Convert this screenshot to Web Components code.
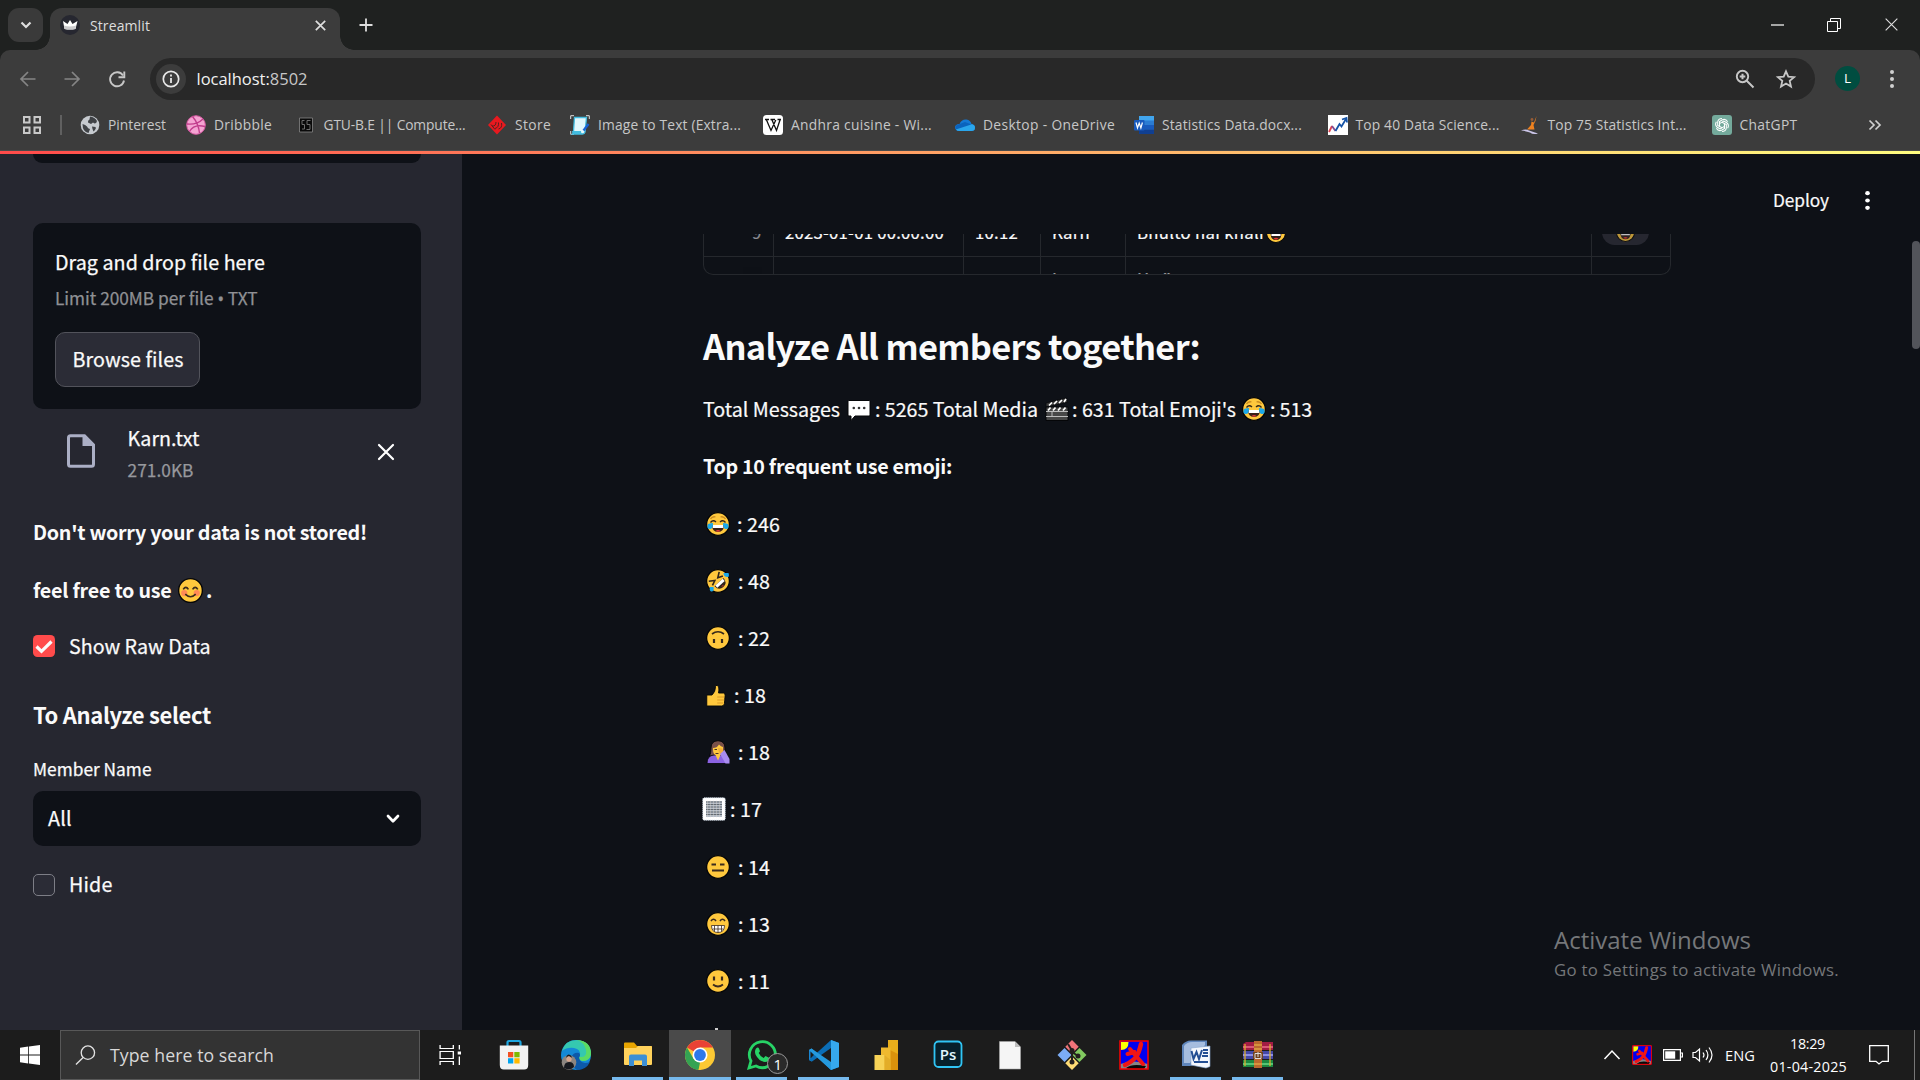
<!DOCTYPE html>
<html lang="en">
<head>
<meta charset="utf-8">
<title>Streamlit</title>
<style>
html,body{margin:0;height:100%;overflow:hidden;background:#0e1117}
body{font-family:"Open Sans","Noto Sans",sans-serif}
</style>
</head>
<body>
<desktop-screen></desktop-screen>
<script>
const face='<circle cx="12" cy="12" r="11.4" fill="#ffc83d" stroke="#050608" stroke-width="1.3"/>';
const tears='<path d="M2 12q3-1 5-1 0 6-3 6-4 0-2-5zM22 12q-3-1-5-1 0 6 3 6 4 0 2-5z" fill="#1ba8e8"/>';
const joy=face+'<path d="M4.5 7q2-3 5-2M19.500 7q-2-3-5-2" fill="none" stroke="#c88a20" stroke-width="1.300"/><path d="M4.500 10.500q2.500-3 5.500-.5M14 10q3-2.500 5.500.5" fill="none" stroke="#33261a" stroke-width="1.400"/><path d="M6 13h12q0 7-6 7t-6-7z" fill="#3a2118"/><path d="M6.700 13h10.600v3H6.700z" fill="#fff"/><path d="M9.500 19q2.500-2 5 0-2.500 1.500-5 0z" fill="#e33b3b"/>'+tears;
const laugh=face+'<path d="M4 9q3-3 6 0M14 9q3-3 6 0" fill="none" stroke="#33261a" stroke-width="1.400"/><path d="M5.500 12.500h13q0 8-6.500 8t-6.500-8z" fill="#30201b"/><path d="M6.500 12.500h11v3h-11z" fill="#fff"/><path d="M9 19q3-2.500 6 0-3 2-6 0z" fill="#e8352f"/>';
const runner='<path d="M1 1h28v28H1z" fill="#0000f0"/><path d="M1.500 24q14-5 27 0v5h-27z" fill="#868686"/><path d="M2 2h7.500q0 8-7.500 8z" fill="#ff0"/><path d="M7 28q6-5 20-2l-2 3H9z" fill="#090909"/><path d="M22 4q-2 9-5 13t-11 8" fill="none" stroke="#f01515" stroke-width="4.500" stroke-linecap="round"/><path d="M11 9l6 7 7 8M8.500 14l7-2" fill="none" stroke="#f01515" stroke-width="4" stroke-linecap="round"/><path d="M1 1h28v28H1z" fill="none" stroke="#f00" stroke-width="1.500"/>';
/* name: [viewBox, markup] */
const ICONS={
 chev:['0 0 16 16','<path d="M3.500 5.500 8 10l4.500-4.500" fill="none" stroke="currentColor" stroke-width="2.200"/>'],
 crown:['0 0 20 20','<circle cx="10" cy="10" r="10" fill="#262730"/><path d="M3 6l4.500 3L10 5l2.500 4L17.500 6l-2 8q-5.500 1-11 0z" fill="#fff"/><path d="M4 10.500q6 2 12 0l-.6 3.500q-5.400 1-10.800 0z" fill="#c9c9cc"/>'],
 x:['0 0 16 16','<path d="M3 3l10 10M13 3 3 13" stroke="currentColor" stroke-width="1.800"/>'],
 del:['0 0 20 20','<path d="M3 3l14 14M17 3 3 17" stroke="currentColor" stroke-width="2.200" stroke-linecap="round"/>'],
 thinx:['0 0 14 14','<path d="M.7.7l12.600 12.600M13.300.7.7 13.300" stroke="currentColor" stroke-width="1.200"/>'],
 plus:['0 0 16 16','<path d="M8 1.500v13M1.500 8h13" stroke="currentColor" stroke-width="1.800"/>'],
 back:['0 0 16 16','<path d="M15.500 8H1.500M8 1 1 8l7 7" fill="none" stroke="currentColor" stroke-width="1.700"/>'],
 fwd:['0 0 16 16','<path d="M.5 8h14M8 1l7 7-7 7" fill="none" stroke="currentColor" stroke-width="1.700"/>'],
 reload:['0 0 18 18','<path d="M15 5.500A7 7 0 1 0 16 10.500" fill="none" stroke="currentColor" stroke-width="1.900"/><path d="M16.300 1.500v5.800h-5.800" fill="none" stroke="currentColor" stroke-width="1.900"/>'],
 info:['0 0 30 30','<circle cx="15" cy="15" r="15" fill="#3c3c3c"/><circle cx="15" cy="15" r="7.700" fill="none" stroke="#e8e8e8" stroke-width="1.700"/><path d="M15 14v5M15 10.500v2" stroke="#e8e8e8" stroke-width="1.800"/>'],
 zoomin:['0 0 20 20','<circle cx="7.500" cy="7.500" r="5.700" fill="none" stroke="currentColor" stroke-width="1.900"/><path d="M11.500 11.500l7 7M7.500 4.700v5.600M4.700 7.500h5.600" stroke="currentColor" stroke-width="2"/>'],
 star:['0 0 20 20','<path d="M10 2.300l2.300 5.300 5.800.5-4.400 3.800 1.300 5.700-5-3-5 3 1.300-5.700L1.900 8.100l5.800-.5z" fill="none" stroke="currentColor" stroke-width="1.800"/>'],
 kebab:['0 0 6 20','<g fill="currentColor"><circle cx="3" cy="3" r="2"/><circle cx="3" cy="10" r="2"/><circle cx="3" cy="17" r="2"/></g>'],
 grid:['0 0 20 20','<path d="M2 2h5.500v5.500H2zM12.500 2H18v5.500h-5.500zM2 12.500h5.500V18H2zM12.500 12.500H18V18h-5.500z" fill="none" stroke="#c9c9c9" stroke-width="2"/>'],
 min:['0 0 14 14','<path d="M0 7h13" stroke="#fff" stroke-width="1.200"/>'],
 restore:['0 0 14 14','<path d="M.5 3.500h10v10H.5zM3.500 3V.5h10v10H11" fill="none" stroke="#fff"/>'],
 more:['0 0 14 14','<path d="M1.500 2.500 6 7l-4.500 4.500M7.500 2.500 12 7l-4.500 4.500" fill="none" stroke="#d0d0d0" stroke-width="1.700"/>'],
 globe:['0 0 20 20','<circle cx="10" cy="10" r="9.300" fill="#c6cacf"/><path d="M2.500 9q3 .5 4.500 2.500.8 2 3 2.500l-1.500 4q-6-1-6-9zM10 1.500q5 .5 7 4.500-.5 2.500-2.500 2.500L13 7.500 11 9 8 7.500q-.5-2 1.500-3zM12 11.500l3.500.5q1 1-.5 3l-1.500 1.500-1-2.500z" fill="#3f4246"/>'],
 drib:['0 0 20 20','<circle cx="10" cy="10" r="9.300" fill="#f4a3d2" stroke="#d95aa4"/><path d="M1 9q10 1 16-5M6.500 1.500q6 7 7 16.500M3.500 16.500Q8 8.500 19 11.500" fill="none" stroke="#c13c8c" stroke-width="1.400"/>'],
 gtu:['0 0 20 20','<path d="M3.500 3h13v14h-13z" fill="#0a0a0a" stroke="#858585" stroke-width=".8"/><path d="M8.500 5.500h-2.500v4h2.500v4.500H6M14.500 5.500h-3.500v4h3v5h-3.500" fill="none" stroke="#6d6d6d" stroke-width="1"/>'],
 store:['0 0 20 20','<path d="M10 .5 19 10l-9 9.500L1 10z" fill="#e8191f"/><path d="M5 11q4 .5 4-4M8 13.500q4-1 3.500-6M11.500 14q4-1 3-6M4 9.500l4 5" fill="none" stroke="#55211f" stroke-width="1"/>'],
 img:['0 0 20 20','<path d="M.7 4V.7H4M16 .7h3.300V4M.7 16v3.300H4" fill="none" stroke="#ddd" stroke-width="1"/><path d="M4.500 2.500h12L15 17q-.5 2-2.500 2H2.500q1-1 1-2.500z" fill="#e3f7fc" stroke="#43bce0" stroke-width="1.300"/><path d="M2 16h9q0 3 2 3H3.500Q2 18.500 2 16z" fill="#43bce0"/><path d="M18.500 9l-5 6.500" stroke="#1761d5" stroke-width="2.300"/>'],
 wiki:['0 0 20 20','<rect width="20" height="20" rx="3.500" fill="#fff"/><path d="M2 4.500h4M7.500 4.500h4.500M14.500 4.500H18M3.500 5l4.500 10.500L12.800 5M9 5l4.500 10.500L17 5" fill="none" stroke="#111" stroke-width="1.300"/>'],
 cloud:['0 0 20 20','<path d="M4.500 9q2-5 7-4.500 4 .5 5 4.500 3.500.5 3.500 3.500T16.500 16H4.500Q0 16 0 12.300 0 9.200 4.500 9z" fill="#1478d4"/><path d="M4 9.200 10 7l6.500 2.500L8 14 1 14.500Q-1 10 4 9.200z" fill="#0a63bd"/><path d="M10 11.500 17 9.200q3 .5 3 3.500 0 3.300-3.500 3.300H4.500q-2.500 0-3.600-1.500z" fill="#2aa6ec"/>'],
 word:['0 0 20 20','<rect x="5" y="1" width="15" height="18" rx="1" fill="#2b7cd3"/><path d="M5 1h15v4.500H5z" fill="#41a5ee"/><path d="M5 10h15v4.500H5z" fill="#185abd"/><path d="M5 14.500h15V19H5z" fill="#103f91"/><rect y="5" width="10.500" height="10.500" rx="1" fill="#185abd"/><path d="M2 7.500l1.500 5.500 1.700-5 1.700 5 1.500-5.500" fill="none" stroke="#fff" stroke-width="1.200"/>'],
 chart:['0 0 20 20','<path d="M0 0h20v20H0z" fill="#fff"/><path d="M1 17l3-6" stroke="#e04352" stroke-width="1.800"/><path d="M4 11l3.500 5" stroke="#814b91" stroke-width="1.800"/><path d="M7.500 16l4-7 2 2.500L18 4M14 4.500l4.500-1.500.5 4.500" fill="none" stroke="#1553a6" stroke-width="1.800"/>'],
 yoga:['0 0 20 20','<path d="M16.500 1q-.5 5-3 9l1 4.500H7l4-4.500.5-3.500 2.500 1z" fill="#ee8220"/><circle cx="12" cy="4.500" r="1.400" fill="#965c37"/><path d="M1 15.500q5-2 8 0l9 3q-5 1.500-8-1-4-1.500-9-2z" fill="#cbc5e8"/>'],
 gpt:['0 0 20 20','<rect width="20" height="20" rx="3" fill="#74aa9c"/><g fill="none" stroke="#fff" stroke-width="1.050">'+[0,60,120,180,240,300].map(a=>`<path d="M10 7.200 14.300 9.600V13q-.5 3.500-4.300 3.500" transform="rotate(${a} 10 10)"/>`).join('')+'</g>'],
 file:['0 0 28 34','<path d="M3.500 1.800h14l9 9v19.400q0 2-2 2h-21q-2 0-2-2V3.800q0-2 2-2z" fill="none" stroke="#abafc5" stroke-width="3"/><path d="M15.500 1v11h11.500L17 1z" fill="#abafc5"/>'],
 check:['0 0 22 22','<rect width="22" height="22" rx="4.500" fill="#ff4b4b"/><path d="M3.500 11.500l5 4.800L18.500 6.500" fill="none" stroke="#fafafa" stroke-width="3.200"/>'],
 box:['0 0 22 22','<rect x=".5" y=".5" width="21" height="21" rx="4.500" fill="#2b2c36" stroke="#7d7e86"/>'],
 selchev:['0 0 14 10','<path d="M2 2l5 5.200L12 2" fill="none" stroke="#fff" stroke-width="2.700" stroke-linecap="round" stroke-linejoin="round"/>'],
 joy:['0 0 24 24',joy],laugh:['0 0 24 24',laugh],
 rofl:['0 0 24 24',face+'<g transform="rotate(-42 12 12)"><path d="M5 6l5 3.500-5 2M19 6l-5 3.500 5 2" fill="none" stroke="#30251a" stroke-width="1.600"/><path d="M6 13.500h12q0 6.500-6 6.500t-6-6.500z" fill="#30251a"/><path d="M7 13.500h10v3H7z" fill="#fff"/><path d="M10 19q2-1.500 4 0z" fill="#e33"/></g><path d="M17.500 4h5q1 2 0 4-5 .5-5-4zM4 18h3.500q1 5-2.500 4.500-2-1.500-1-4.500z" fill="#1ba8e8"/>'],
 upside:['0 0 24 24',face+'<path d="M6 8q6-4.500 12 0" fill="none" stroke="#36281b" stroke-width="1.700"/><path d="M8 13v4M16 13v4" stroke="#36281b" stroke-width="2.200"/>'],
 thumb:['0 0 24 24','<path d="M2 12h6q4-3 4-8.500 0-1.500 2-1 2.800 1 1.500 7.500H21q2 0 2 2.200l-.8 8.500q-.5 2.300-3 2.300H2z" fill="#ffc83d" stroke="#050608"/><path d="M14 14h8M14 17h8M14 20h7" stroke="#d99624" stroke-width="1"/>'],
 facepalm:['0 0 24 24','<path d="M3.500 16Q5 13 5 8q0-7 7-7.300Q19 1 19 8v8z" fill="#795048" stroke="#050608"/><path d="M1 23.500q0-8 7-8.500h8l7.500 8.500z" fill="#8b63e2" stroke="#050608" stroke-width=".8"/><path d="M7 8q4 0 6-3.500 2 2 4 2.500v3q0 5.500-5 5.500T7 10zM9.500 15h5L12 20.500z" fill="#ffc83d"/><path d="M8.500 9.500h2.500M9.500 13.500h3" stroke="#4b3320"/><path d="M12 8l4 .5 2.500 4-3 2.500q-3-2-3.500-7z" fill="#f2ad38"/><path d="M14 14l4.500-4 5 9v4.500h-4z" fill="#a98cf0"/>'],
 tofu:['0 0 24 24','<rect x=".8" y=".8" width="22.400" height="22.400" rx="1.500" fill="#fff" stroke="#d5e2ee" stroke-dasharray="1 1"/><path d="M4 4h16v16H4z" fill="#b4bcc6"/><path d="M4 5h16M4 7.500h16M4 10h16M4 12.500h16M4 15h16M4 17.500h16" stroke="#5a6168" stroke-width=".9"/><path d="M5.500 3.500v17M8.500 3.500v17M11.500 3.500v17M14.500 3.500v17M17.500 3.500v17" stroke="#dfd8d3" stroke-width=".4"/>'],
 flat:['0 0 24 24',face+'<path d="M5.500 9.500H10M14 9.500h4.500M6 15.500h12" stroke="#3c2b1d" stroke-width="2"/>'],
 grin:['0 0 24 24',face+'<path d="M5 9q2.500-3.500 5 0M14 9q2.500-3.500 5 0" fill="none" stroke="#3c2b1d" stroke-width="1.600"/><path d="M5.500 13.500h13q0 7-6.500 7t-6.500-7z" fill="#fff" stroke="#3c2b1d" stroke-width=".8"/><path d="M6.500 17h11M8.500 13.500v6M12 13.500v7M15.500 13.500v6" stroke="#3c2b1d" stroke-width=".8"/>'],
 smile:['0 0 24 24',face+'<path d="M8 7.500v4M16 7.500v4" stroke="#3c2b1d" stroke-width="2.200"/><path d="M7 15.500q5 4 10 0" fill="none" stroke="#3c2b1d" stroke-width="1.700"/>'],
 blush:['0 0 24 24',face+'<circle cx="6" cy="14.500" r="3" fill="#ff8a55"/><circle cx="18" cy="14.500" r="3" fill="#ff8a55"/><path d="M5 11q2.500-4 5 0M14 11q2.500-4 5 0M7 15.500q5 5 10 0" fill="none" stroke="#3c2b1d" stroke-width="1.500"/>'],
 bubble:['0 0 24 24','<path d="M2 3.500h20q1 0 1 1V18q0 1-1 1H8l-4 4.500V19H2q-1 0-1-1V4.500q0-1 1-1z" fill="#fff" stroke="#050608"/><g fill="#333"><circle cx="6.800" cy="11" r="1.300"/><circle cx="12" cy="11" r="1.300"/><circle cx="17.200" cy="11" r="1.300"/></g>'],
 clap:['0 0 24 24','<path d="M1 6 21.500.8l1 4.500L1 10z" fill="#383838" stroke="#050608" stroke-width=".7"/><path d="M1 10h22v13.500H1z" fill="#484848" stroke="#050608"/><path d="M4 8.500l3-3M9 7l3-3M14 6l3-3M19 5l2-3M3 13.500l2.500-3M8 13.500l2.500-3M13 13.500l2.500-3M18 13.500l2.500-3" stroke="#fff" stroke-width="1.700"/><path d="M1 14.500h22M1 19.500h22M7 14.500v5" stroke="#c9c9c9" stroke-width=".9"/>'],
 win:['0 0 20 20','<path d="M0 2.800l8.200-1.200v7.900H0zM9 1.500 20 0v9.500H9zM0 10.500h8.200v7.900L0 17.200zM9 10.500h11V20L9 18.500z" fill="#fff"/>'],
 search:['0 0 22 22','<circle cx="13.500" cy="8" r="7" fill="none" stroke="#e3e3e3" stroke-width="1.400"/><path d="M8.500 13 1 20.500" stroke="#e3e3e3" stroke-width="1.400"/>'],
 taskv:['0 0 20 20','<path d="M1 0v3.500h12V0M1 20v-3.500h12V20M1 6.500h12v7H1zM18.500 0v4.500M18.500 11.500V20" fill="none" stroke="#fff" stroke-width="1.200"/><path d="M17 6.500h3v3h-3z" fill="#fff"/>'],
 msstore:['0 0 30 30','<path d="M8.500 8V2.500q0-1.500 1.500-1.500h10q1.500 0 1.500 1.500V8" fill="none" stroke="#1da6e0" stroke-width="2.200"/><path d="M.8 5.500h28.400V25q0 4.500-4 4.500H4.800q-4 0-4-4.500z" fill="#f2f2f2"/><path d="M9 12h5.300v5.300H9z" fill="#f25022"/><path d="M15.300 12h5.300v5.300h-5.300z" fill="#7fba00"/><path d="M9 18.200h5.300v5.300H9z" fill="#00a4ef"/><path d="M15.300 18.200h5.300v5.300h-5.300z" fill="#ffb900"/>'],
 edge:['0 0 30 30','<circle cx="15" cy="15" r="15" fill="#1489d6"/><path d="M1 11Q4 0 16 0q14 1 14 14-1 7-8 7-6-1-3-5 1-7-6-8-7-1-12 3z" fill="#35c8b0"/><path d="M16 0q14 1 14 14-1 7-8 7-5-1-3.500-4 8 1 6.500-7-2-8-9-10z" fill="#5bdb63"/><path d="M18 17q0 5 6 6 3 0 5-1-4 8-13 8-8-5-6-12 2-6 8-5 2 2 0 4z" fill="#0d59a9"/><circle cx="8" cy="22.500" r="7.300" fill="#8c8580"/><circle cx="8" cy="19" r="2.700" fill="#d7a68d"/><path d="M5.500 18q2-4 5 0v-2q-3-3-5 0zM3 28q0-6 5-6t5 5q-4 4-10 1z" fill="#17191f"/>'],
 explorer:['0 0 30 30','<path d="M1 3.500q0-1 1-1h9l3 3.500h14q1 0 1 1v5H1z" fill="#e8a500"/><path d="M1 8h12l2-2h13q1 0 1 1v17q0 1-1 1H2q-1 0-1-1z" fill="#ffd25c"/><path d="M6 26V16.500Q6 14.500 8 14.500h14q2 0 2 2V26h-5v-5.500h-8V26z" fill="#3c8fd5"/>'],
 chrome:['0 0 30 30','<circle cx="15" cy="15" r="15" fill="#fcc934"/><path d="M15 15 2 7.500A15 15 0 0 1 28 7.500H15z" fill="#e94235"/><path d="M2 7.500 8.500 18.800 15 22.500l0 0L13.500 30A15 15 0 0 1 2 7.500z" fill="#34a353"/><path d="M21.500 18.700 15 30h-1.500l3-8z" fill="#fcc934"/><circle cx="15" cy="15" r="7.500" fill="#fff"/><circle cx="15" cy="15" r="5.900" fill="#2e78ea"/>'],
 wa:['0 0 30 30','<path d="M2 28l2-7A13 13 0 1 1 9 26z" fill="none" stroke="#27d366" stroke-width="2.800"/><path d="M9 8.500q2-2 3 0l1 2.800-1.300 1.700q1.500 3.500 5 5l1.800-2 3.500 1.700q.5 4-4 4.300-6-.5-9.500-7.500-1.200-3.500.5-6z" fill="#27d366"/>'],
 vs:['0 0 30 30','<path d="M22 0l8 3v24l-8 3L8 17l-5.500 4.500L0 20V10l2.500-1.500L22 25z" fill="#1a85d0"/><path d="M0 20 22 0v8L3 21.500z" fill="#0b6db5"/><path d="M0 10l2.500-1.500L22 22v8z" fill="#2599dd"/><path d="M22 0l8 3v24l-8 3z" fill="#36a8ee"/><path d="M1.500 11.500v7l3.500-3.500z" fill="#1c1c1c"/>'],
 pbi:['0 0 30 30','<path d="M17 0h10v30H17z" fill="#d9920c"/><path d="M17 0h10v14l-10-5z" fill="#e8ae1b"/><path d="M10 7.500h9.500V30H10z" fill="#efb92f"/><path d="M3.500 15h10v15h-10z" fill="#f7d256"/><path d="M13.500 15v15h6V20z" fill="#e3ad28"/>'],
 ps:['0 0 30 30','<rect x="1.500" y="1.500" width="27" height="25.500" rx="4" fill="#07202b" stroke="#30c5f5" stroke-width="1.800"/><text x="15" y="19.700" text-anchor="middle" font-family="Open Sans" font-size="15" font-weight="600" fill="#e1f6ff">Ps</text>'],
 doc:['0 0 30 30','<path d="M4.500 1.500h15.500l5.500 5.500v22h-21z" fill="#f5f5f5" stroke="#aaa" stroke-width=".6"/><path d="M20 1.500V7h5.500z" fill="#bcbcbc"/>'],
 git:['0 0 30 30','<path d="M15 0l6.700 6.700L15 13.500 8.300 6.700z" fill="#f17479"/><path d="M7.500 8l7 7-7 7-7-7z" fill="#7cacf5"/><path d="M22.500 8l7 7-7 7-7-7z" fill="#82ca60"/><path d="M15 16.500l6.700 6.700L15 30l-6.700-6.800z" fill="#ffdc75"/><path d="M11 4l4 6.500V24M15 12l6 4" fill="none" stroke="#241f1e" stroke-width="2"/><g fill="#241f1e"><circle cx="15" cy="10.500" r="2.500"/><circle cx="21" cy="16" r="2.500"/><circle cx="15" cy="22" r="2.500"/></g>'],
 runner:['0 0 30 30',runner],
 word10:['0 0 30 30','<path d="M1 5Q5 0 11 .5h15V22L9 26H1z" fill="#5f86bc"/><path d="M3 6q3-4 8-4h13v3L9 23H3z" fill="#a6bdde"/><path d="M10 8l19-2v20.500L25 28 10 25z" fill="#f4f7fc" stroke="#87a6cf" stroke-width=".6"/><path d="M10.500 11l2 8 3-7 2.500 7 3-9M22 10h5M22 13h5M21 16h6M13 22h14" fill="none" stroke="#234e93" stroke-width="2"/>'],
 rar:['0 0 30 30','<path d="M0 4l3-2h27v8H0z" fill="#a31c43"/><path d="M0 6h30v2H0z" fill="#da5776"/><path d="M0 11h30v8H0z" fill="#4549a8"/><path d="M0 14h30v2H0z" fill="#8d8fe3"/><path d="M0 20h30v7H0z" fill="#1c8740"/><path d="M0 23h30v2H0z" fill="#55c373"/><path d="M11 1h8v27h-8z" fill="#bb692e"/><path d="M2 4v22M27 4v22" stroke="#d9ae31" stroke-width="1.300"/><path d="M11 5h8M11 9h8M11 24h8" stroke="#f2c04c"/><path d="M10 12h10v7H10z" fill="#71421f"/><path d="M12 13.500h6v5h-6zM15 12v5" fill="none" stroke="#ddd"/>'],
 up:['0 0 18 12','<path d="M1.500 10 9 2l7.500 8" fill="none" stroke="#fff" stroke-width="1.500"/>'],
 batt:['0 0 20 12','<path d="M.6.600h16.800v10.800H.6zM18 4h1.400v4H18" fill="none" stroke="#fff" stroke-width="1.200"/><path d="M2.200 2.300h10v7.400h-10z" fill="#fff"/>'],
 sound:['0 0 22 18','<path d="M1 6.500h2.500L7.500 3v12L3.500 11.500H1z" fill="none" stroke="#fff" stroke-width="1.200"/><path d="M11 6.500q2 2.500 0 5M14 4q3.800 5 0 10M17 1.500q6 7.500 0 15" fill="none" stroke="#fff" stroke-width="1.200"/>'],
 note:['0 0 20 20','<path d="M.7.700h18.600v15.600h-6L10 19l-3-2.700H.7z" fill="none" stroke="#fff" stroke-width="1.300"/>']
};
const T=(w,fs,txt,st='')=>`<ui-text w="${w}" style="font-size:${fs}px;${st}">${txt}</ui-text>`;
const I=(n,w,h=w,st='')=>`<ui-icon name="${n}" style="width:${w}px;height:${h}px;${st}"></ui-icon>`;
const BOLD='font-weight:700;-webkit-text-stroke:0';
const make=(tag,html)=>customElements.define(tag,class extends HTMLElement{
  constructor(){super();this.attachShadow({mode:'open'}).innerHTML=typeof html==='function'?html(this):html}
});

make('desktop-screen',`<style>:host{display:flex;flex-direction:column;width:1920px;height:1080px;overflow:hidden;background:#0e1117}
main{display:flex;height:876px;overflow:hidden}.line{height:3px;background:linear-gradient(90deg,#ff4b4b,#fffd80)}</style>
<tab-strip></tab-strip><address-bar></address-bar><bookmarks-bar></bookmarks-bar><div class="line"></div>
<main><side-bar></side-bar><main-view></main-view></main><task-bar></task-bar>`);

make('tab-strip',`<style>:host{display:flex;height:50px;background:#1f2120;color:#dedede;align-items:flex-start;box-sizing:border-box;padding:8px 0 0 8px}
.drop{width:35px;height:34px;border-radius:11px;background:#3a3a3a;display:flex;align-items:center;justify-content:center}
.tab{position:relative;width:290px;height:42px;margin-left:7px;background:#3c3c3c;border-radius:12px 12px 0 0;display:flex;align-items:center;box-sizing:border-box;padding:0 12px 8px 10px}
.tab:before,.tab:after{content:"";position:absolute;bottom:0;width:14px;height:14px}
.tab:before{left:-14px;background:radial-gradient(circle at 0 0,transparent 13.500px,#3c3c3c 14px)}
.tab:after{right:-14px;background:radial-gradient(circle at 100% 0,transparent 13.500px,#3c3c3c 14px)}
.grow{flex:1}.plus{margin:9px 0 0 18px}.wc{display:flex;margin-top:10px;gap:42px;margin-right:22px}</style>
<div class="drop">${I('chev',16)}</div>
<div class="tab">${I('crown',20)}${T(59,14,'Streamlit','margin-left:10px')}<div class="grow"></div>${I('x',15)}</div>
<div class="plus">${I('plus',16)}</div><div class="grow"></div>
<div class="wc">${I('min',14)}${I('restore',14)}${I('thinx',13,13,'margin-left:2px')}</div>`);

make('address-bar',`<style>:host{display:flex;height:58px;background:#1f2120}
.bar{display:flex;align-items:center;width:1920px;background:#3c3c3c;border-radius:10px 10px 0 0;color:#c7c7c7;box-sizing:border-box;padding:0 25px 0 20px}
.pill{display:flex;align-items:center;width:1665px;height:42px;border-radius:21px;background:#282828;margin-left:24px;box-sizing:border-box;padding:0 19px 0 6px}
.grow{flex:1}.av{width:25px;height:25px;border-radius:50%;background:#004d40;display:flex;align-items:center;justify-content:center;margin:0 28px 2px 20px;color:#fff}</style>
<div class="bar">${I('back',16,16,'color:#858585')}${I('fwd',16,16,'color:#858585;margin-left:28px')}${I('reload',18,18,'margin-left:28px')}
<div class="pill">${I('info',30)}${T(110,16.5,'<span style="color:#f1f1f1">localhost:</span>8502','margin:-1px 0 0 10.500px')}<div class="grow"></div>${I('zoomin',20)}${I('star',20,20,'margin-left:21px')}</div>
<div class="av">${T(7,13.5,'L')}</div><div class="grow"></div>${I('kebab',6,20,'color:#d0d0d0')}</div>`);

make('bookmark-item',`<style>:host{display:flex;align-items:center;gap:8px;flex:none}</style><slot></slot>`);
const BM=[['globe',57,'Pinterest',106],['drib',57,'Dribbble',109.5],['gtu',141,'GTU-B.E || Compute...',191.5],['store',35,'Store',83],['img',142,'Image to Text (Extra...',193],['wiki',140,'Andhra cuisine - Wi...',192],['cloud',131,'Desktop - OneDrive',179],['word',139,'Statistics Data.docx...',193.5],['chart',143,'Top 40 Data Science...',192],['yoga',138,'Top 75 Statistics Int...',192],['gpt',57,'ChatGPT',156]];
make('bookmarks-bar',`<style>:host{display:flex;align-items:center;height:43px;background:#3c3c3c;color:#c7c7c7;box-sizing:border-box;padding:0 0 9px 22px;border-bottom:1px solid #4b4b4b}
.sep{width:2px;height:20px;background:#606060;margin:0 18px}</style>${I('grid',20)}<div class="sep"></div>
${BM.map(b=>`<bookmark-item style="width:${b[3]}px">${I(b[0],20)}${T(b[1],13.8,b[2])}</bookmark-item>`).join('')}${I('more',14)}`);

const CJK='"Noto Sans CJK SC","Noto Sans",sans-serif';
make('file-uploader',`<style>:host{display:flex;flex-direction:column;align-items:flex-start;width:388px;height:186px;background:#0e1117;border-radius:10px;box-sizing:border-box;padding:24px 22px 20px}
.btn{display:flex;flex:none;align-items:center;justify-content:center;width:145px;height:55px;box-sizing:border-box;border:1px solid #52535b;border-radius:10px;background:#2b2c36;margin-top:22px}</style>
${T(209,19.7,'Drag and drop file here','line-height:30px')}${T(201.5,17.3,'Limit 200MB per file <span style="font-family:Noto Sans">•</span> TXT','line-height:24px;height:24px;margin-top:9px;color:#8f9094')}
<div class="btn">${T(110,19.7,'Browse files','line-height:30px;margin-top:-2px')}</div>`);
make('check-row',`<style>:host{display:flex;align-items:center;gap:14px;height:30px}</style><slot></slot>`);
make('side-bar',`<style>:host{display:flex;flex-direction:column;align-items:flex-start;width:462px;flex:none;height:876px;background:#262730;color:#fafafa;font-family:${CJK};-webkit-text-stroke:.25px;box-sizing:border-box;padding-left:33px}
.top{width:388px;height:9px;background:#0e1117;border-radius:0 0 10px 10px;margin-bottom:60px}
.file{display:flex;width:388px;height:60px;margin-top:14px}.meta{display:flex;flex-direction:column;margin-left:32.500px;width:248.500px}
.row{display:flex;align-items:center;height:30px}
.sel{display:flex;align-items:center;justify-content:space-between;width:388px;height:55px;border-radius:10px;background:#0e1117;box-sizing:border-box;padding:0 21px 0 15px;margin-top:8px}</style>
<div class="top"></div><file-uploader></file-uploader>
<div class="file">${I('file',28,34,'margin:11px 0 0 34px')}<div class="meta">${T(71,19.7,'Karn.txt','line-height:30px')}${T(65,17.3,'271.0KB','line-height:24px;margin-top:5px;color:#97989d')}</div>${I('del',20,20,'margin-top:19px;color:#fff')}</div>
<div class="row" style="margin-top:33px">${T(333,19.7,"Don't worry your data is not stored!",BOLD)}</div>
<div class="row" style="margin-top:28px">${T(137.5,19.7,'feel free to use',BOLD)}${I('blush',25,25,'margin:3px 3px 0 7.500px')}${T(4,19.7,'.',BOLD)}</div>
<check-row style="margin-top:27px">${I('check',22)}${T(140.5,19.7,'Show Raw Data','margin-top:-2px')}</check-row>
<div class="row" style="margin-top:38px">${T(177,22,'To Analyze select',BOLD)}</div>
<div class="row" style="margin-top:24px">${T(117.5,17.3,'Member Name')}</div>
<div class="sel">${T(23,19.7,'All','margin-top:-2px')}${I('selchev',14,10)}</div>
<check-row style="margin-top:24px">${I('box',22)}${T(42.5,19.7,'Hide','margin-top:-3px')}</check-row>`);

make('data-row',`<style>:host{display:grid;grid-template-columns:70px 190px 77px 85px 466px 78px;height:48px;flex:none;border-bottom:1px solid #25282d;box-sizing:border-box}
::slotted(div){display:flex;align-items:center;border-right:1px solid #25282d;padding-left:11px;box-sizing:border-box}</style><slot></slot>`);
make('data-table',`<style>:host{display:flex;flex-direction:column;justify-content:flex-start;flex:none;width:968px;height:41px;margin-left:241px;overflow:hidden;border:1px solid #25282d;border-top:0;border-radius:0 0 10px 10px;box-sizing:border-box}
.pill{width:47px;height:25px;border-radius:13px;background:#262730;display:flex;align-items:center;justify-content:center}.next ui-text{margin-top:-3px;opacity:.6}</style>
<data-row style="margin-top:-25px"><div style="justify-content:flex-end;padding-right:12px;color:#8c8e93">${T(9,16.7,'9','margin-top:-2px')}</div><div>${T(158,16.7,'2023-01-01 00:00:00','margin-top:-2px')}</div><div>${T(42,16.7,'10:12','margin-top:-2px')}</div><div>${T(37,16.7,'Karn','margin-top:-2px')}</div><div>${T(126,16.7,'Bhulto nai khali','margin-top:-2px')}${I('laugh',20,20,'margin:0 0 0 3px')}</div><div style="border:0;padding-left:10px"><div class="pill">${I('laugh',19,19,'opacity:.7')}</div></div></data-row>
<data-row class="next"><div style="justify-content:flex-end;padding-right:12px;color:#8c8e93">${T(18,16.7,'10')}</div><div>${T(158,16.7,'2023-01-01 00:00:00')}</div><div>${T(42,16.7,'10:12')}</div><div>${T(9,16.7,'L')}</div><div>${T(32,16.7,'Hmji')}</div><div style="border:0"></div></data-row>`);
make('emoji-count',`<style>:host{display:flex;align-items:center;height:30px;flex:none;margin:0 0 27.100px 240px}</style><slot></slot>`);
const EC=[['joy',24,5,': 246',42,7],['rofl',24,5,': 48',31,8],['upside',24,5,': 22',31,8],['thumb',21,4,': 18',31,8],['facepalm',24,5,': 18',31,8],['tofu',24,1,': 17',31,4],['flat',24,5,': 14',31,8],['grin',24,5,': 13',31,8],['smile',24,5,': 11',31,8]];
make('main-view',`<style>:host{display:flex;flex-direction:column;position:relative;flex:1;height:876px;color:#fafafa;font-family:${CJK};-webkit-text-stroke:.2px}
header{display:flex;height:80px;align-items:center;justify-content:flex-end;flex:none;box-sizing:border-box;padding:12px 49px 0 0}
.line{display:flex;align-items:center;height:30px;flex:none;margin-left:241px}
.scroll{position:absolute;right:0;top:87px;width:8px;height:108px;border-radius:4px;background:#52545a}
.wm{position:absolute;left:1092px;top:769px;color:#75777a;font-family:"Open Sans",sans-serif;-webkit-text-stroke:0}.tip{width:3px;height:2px;background:#ccc;margin:6px 0 0 253px}</style>
<header>${T(55,17.3,'Deploy','margin-top:-2px')}${I('kebab',7,21,'margin-left:36px;color:#fff')}</header>
<data-table></data-table>
<div class="line" style="height:50px;margin-top:45px">${T(496,34.4,'Analyze All members together:',BOLD)}</div>
<div class="line" style="margin-top:23px">${T(136,19.7,'Total Messages')}${I('bubble',24,24,'margin:1px 4px 0 8px')}${T(162,19.7,': 5265 Total Media')}${I('clap',24,24,'margin:1px 3px 0 8px')}${T(163,19.7,": 631 Total Emoji's")}${I('joy',24,24,'margin:1px 4px 0 7px')}${T(41,19.7,': 513')}</div>
<div class="line" style="margin:27px 0 28.500px 241px">${T(248,19.7,'Top 10 frequent use emoji:',BOLD)}</div>
${EC.map(e=>`<emoji-count>${I(e[0],e[1],24,`margin:1px ${e[5]}px 0 ${e[2]-1}px`)}${T(e[4],19.7,e[3])}</emoji-count>`).join('')}<div class="tip"></div>
<div class="scroll"></div><div class="wm">${T(196,24,'Activate Windows','line-height:34px')}${T(284,16.8,'Go to Settings to activate Windows.','line-height:24px;margin-top:1px')}</div>`);

make('task-app',e=>`<style>:host{position:relative;display:flex;align-items:center;justify-content:center;width:62px;height:50px;box-sizing:border-box;flex:none}
:host([run]):after{content:"";position:absolute;bottom:0;left:5px;width:51px;height:3px;background:#76b9ed}
:host([active]){background:#4a4a4a}:host([active]):after{left:0;width:62px}
.badge{position:absolute;left:36px;top:23px;width:19px;height:19px;border-radius:50%;border:1px solid #999;background:#2a2a2a;color:#fff;display:flex;align-items:center;justify-content:center}</style>
${I(e.getAttribute('icon'),30)}${e.hasAttribute('badge')?`<div class="badge">${T(8,15,'1')}</div>`:''}`);
const APPS=['msstore','edge','explorer run','chrome run active','wa run badge','vs run','pbi','ps','doc','git','runner','word10 run','rar run'];
make('task-bar',`<style>:host{display:flex;align-items:center;height:50px;background:#1c1c1c;color:#fff}
.s{display:flex;align-items:center;width:360px;height:50px;box-sizing:border-box;border:1px solid #585858;background:#333;margin-left:20px;padding-left:14px}
.tv{margin:0 19px 0 19px;display:flex}.grow{flex:1}.clock{display:flex;flex-direction:column;align-items:center;width:76px;margin-left:16px}
.end{width:1px;height:50px;background:#777;margin:0 5px 0 25px}</style>
${I('win',20,20,'margin-left:20px')}<div class="s">${I('search',21)}${T(163,17.7,'Type here to search','margin-left:14px;color:#d8d8d8')}</div>
<div class="tv">${I('taskv',22,20)}</div>
<div style="display:flex;margin-left:3px">${APPS.map(a=>{const[n,...f]=a.split(' ');return`<task-app icon="${n}" ${f.join(' ')}></task-app>`}).join('')}</div>
<div class="grow"></div>${I('up',18,12)}${I('runner',20,20,'margin-left:11px')}${I('batt',20,12,'margin-left:11px')}${I('sound',22,18,'margin-left:9px')}${T(29,14.6,'ENG','margin-left:11px')}
<div class="clock">${T(34,14.3,'18:29','line-height:23px;margin-left:-2px')}${T(76,14.3,'01-04-2025','line-height:23px')}</div>${I('note',20,20,'margin-left:23px')}<div class="end"></div>`);

customElements.define('ui-icon',class extends HTMLElement{
  connectedCallback(){
    if(this.shadowRoot)return;
    const d=ICONS[this.getAttribute('name')];
    this.attachShadow({mode:'open'}).innerHTML=`<style>:host{display:block;flex:none}svg{display:block;width:100%;height:100%;overflow:visible}</style><svg viewBox="${d[0]}" preserveAspectRatio="none">${d[1]}</svg>`;
  }
});
/* Text run whose tracking is tuned so that it fills the width given in "w". */
customElements.define('ui-text',class extends HTMLElement{
  connectedCallback(){
    if(this.shadowRoot)return;
    const w=+this.getAttribute('w');
    this.attachShadow({mode:'open'}).innerHTML=`<style>:host{display:block;flex:none;white-space:nowrap;width:${w}px}span{display:inline-block}</style><span><slot></slot></span>`;
    const s=this.shadowRoot.querySelector('span'),n=this.textContent.length;
    if(n>1)s.style.letterSpacing=((w+1-s.getBoundingClientRect().width)/n).toFixed(3)+'px';
  }
});
</script>
</body>
</html>
